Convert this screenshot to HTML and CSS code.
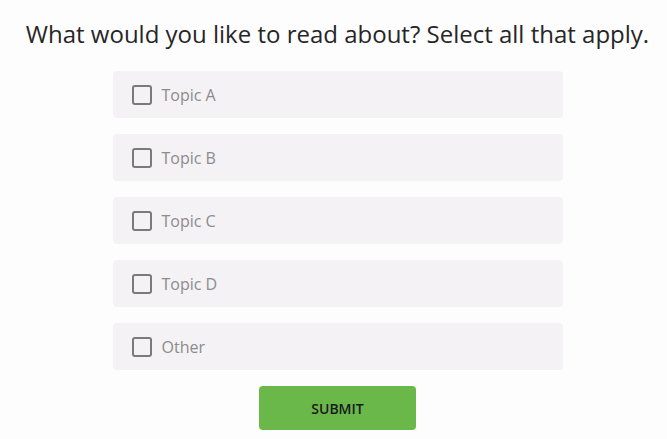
FILE: index.html
```html
<!DOCTYPE html>
<html lang="en">
<head>
  <meta charset="UTF-8" />
  <title>Survey</title>
  <meta name="viewport" content="width=device-width, initial-scale=1.0" />
  <link rel="stylesheet" href="styles.css">
</head>
<body>
  <div class="survey">
    <h1>What would you like to read about? Select all that apply.</h1>

    <div class="options">
      <label class="option"><span class="box"></span>Topic A</label>
      <label class="option"><span class="box"></span>Topic B</label>
      <label class="option"><span class="box"></span>Topic C</label>
      <label class="option"><span class="box"></span>Topic D</label>
      <label class="option"><span class="box"></span>Other</label>
    </div>

    <button class="submit">SUBMIT</button>
  </div>
</body>
</html>
```

FILE: styles.css
```css
body {
  margin: 0;
  font-family: 'Open Sans', sans-serif;
  background-color: #fefdfe;
}

.survey {
  display: flex;
  flex-direction: column;
  align-items: center;
  padding: 18px 0 0 8px;
}

.survey h1 {
  margin: 0 0 21px;
  font-size: 24px;
  font-weight: normal;
  color: #262626;
  line-height: 32px;
}

.options {
  display: flex;
  flex-direction: column;
  gap: 16px;
  width: 450px;
}

.option {
  display: flex;
  align-items: center;
  height: 47px;
  padding-left: 19px;
  background-color: #f4f2f5;
  border-radius: 4px;
  font-size: 16px;
  color: #8c8c8c;
}

.option .box {
  width: 16px;
  height: 16px;
  margin-right: 10px;
  border: 2px solid #7a7a7a;
  border-radius: 3px;
}

.submit {
  margin-top: 16px;
  width: 157px;
  height: 44px;
  background-color: #6ab74a;
  border: none;
  border-radius: 4px;
  font-family: 'Open Sans', sans-serif;
  font-size: 14px;
  font-weight: 600;
  color: #1a1a1a;
  cursor: pointer;
}
```
